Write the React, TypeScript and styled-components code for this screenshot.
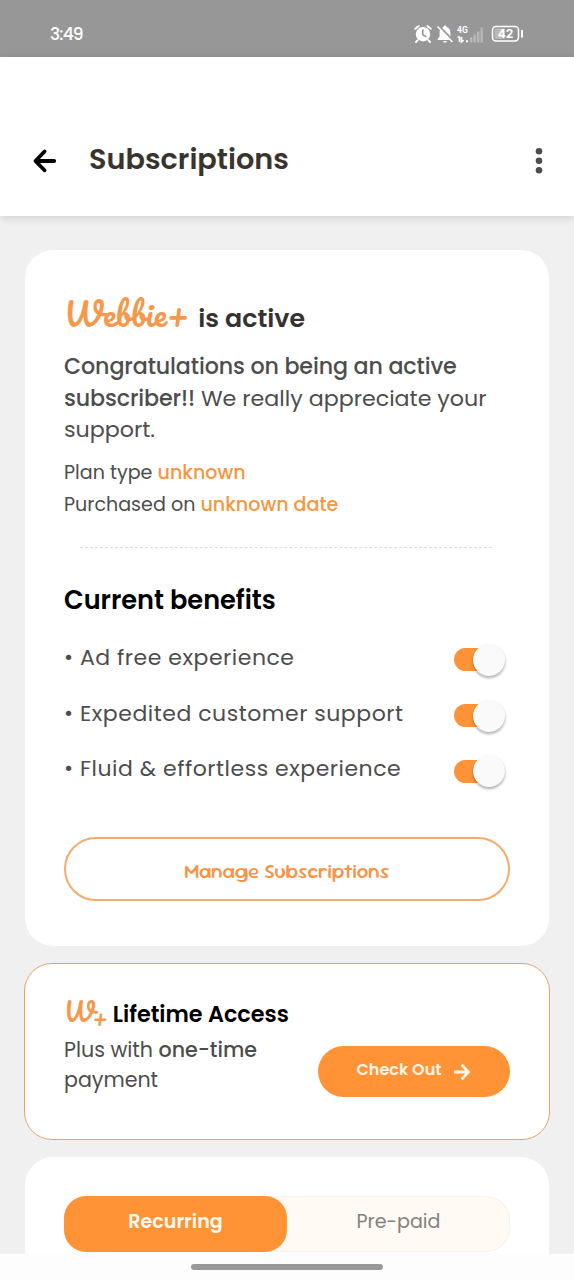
import React from 'react';
import styled, { createGlobalStyle } from 'styled-components';

const orange = '#ff9335';

const GlobalStyle = createGlobalStyle`
  * { box-sizing: border-box; }
  html, body { margin: 0; padding: 0; }
  body {
    background: #f0f0f0;
    font-family: Poppins, Inter, 'Open Sans', sans-serif;
    font-feature-settings: 'cv11' 1;
    overflow: hidden;
  }
`;

const Screen = styled.div`
  display: flex;
  flex-direction: column;
  width: 574px;
  height: 1280px;
  overflow: hidden;
  background: #f0f0f0;
`;

const StatusBar = styled.div`
  flex: none;
  display: flex;
  align-items: center;
  justify-content: space-between;
  height: 57px;
  padding: 11px 49px 0 50px;
  background: #979797;
  color: #fff;
`;

const Clock = styled.span`
  font-size: 17px;
  font-weight: 500;
  letter-spacing: -0.8px;
`;

const Header = styled.header`
  flex: none;
  display: flex;
  align-items: center;
  height: 159px;
  padding: 48px 26px 0 32px;
  background: #fff;
  box-shadow: 0 2px 8px rgba(0, 0, 0, 0.14);
`;

const Title = styled.h1`
  flex: 1;
  margin: 0 0 3px 32px;
  font-size: 28.7px;
  line-height: 36px;
  font-weight: 600;
  color: #3a342e;
`;

const Content = styled.main`
  flex: 1;
  min-height: 0;
  display: flex;
  flex-direction: column;
  gap: 17px;
  padding: 34px 24px 0;
  overflow: hidden;
`;

const Card = styled.section<{ $height: number; $outlined?: boolean }>`
  flex: none;
  height: ${(p) => p.$height}px;
  margin: ${(p) => (p.$outlined ? 0 : '0 1px')};
  padding: ${(p) => (p.$outlined ? '35px 39px 0' : '39px 39px 0')};
  border: ${(p) => (p.$outlined ? `1px solid #e9a163` : 'none')};
  border-radius: 28px;
  background: #fff;
`;

const Run = styled.span<{ $ls?: number; $bold?: boolean; $accent?: boolean }>`
  letter-spacing: ${(p) => p.$ls ?? 0}px;
  font-weight: ${(p) => (p.$bold || p.$accent ? 500 : 'inherit')};
  color: ${(p) => (p.$accent ? '#f8963f' : 'inherit')};
`;

const BrandLine = styled.h2`
  display: flex;
  align-items: baseline;
  height: 58px;
  margin: 0;
  padding: 8px 0 0;
  font-size: 25.3px;
  line-height: 40px;
  font-weight: 600;
  color: #35322f;
`;

const Wordmark = styled.span<{ $size: number; $gap: number }>`
  margin-right: ${(p) => p.$gap}px;
  font-family: Pacifico, Lato, sans-serif;
  font-size: ${(p) => p.$size}px;
  line-height: 1;
  font-weight: 400;
  color: #f5984a;
`;

const PlusMark = styled.span`
  position: relative;
  top: 4px;
  margin-left: -2px;
  font-size: 22px;
`;

const Lead = styled.p`
  margin: 4px 0 11px;
  font-size: 22.2px;
  line-height: 31.5px;
  color: #4d4d4d;
  white-space: nowrap;
`;

const Detail = styled.p`
  margin: 0;
  font-size: 19.1px;
  line-height: 32px;
  color: #4d4d4d;
`;

const Divider = styled.hr`
  width: 412px;
  margin: 26px 0 0 16px;
  border: 0;
  border-top: 1px dashed #e2d9d2;
`;

const SectionTitle = styled.h3`
  margin: 33px 0 22px;
  font-size: 25.6px;
  line-height: 38px;
  font-weight: 600;
  color: #000;
`;

const Benefit = styled.div`
  display: flex;
  align-items: center;
  justify-content: space-between;
  height: 55.7px;
  padding-right: 5px;
  font-size: 22px;
  color: #4d4d4d;
`;

const BenefitList = styled.div`
  margin-top: -11px;
`;

const Toggle = styled.span`
  display: flex;
  align-items: center;
  justify-content: flex-end;
  width: 51px;
  height: 23px;
  margin-top: 5px;
  border-radius: 12px;
  background: linear-gradient(90deg, ${orange} 36px, transparent 36px);
`;

const Knob = styled.span`
  width: 32px;
  height: 32px;
  border-radius: 50%;
  background: #fafafa;
  box-shadow: 0 2px 3px rgba(0, 0, 0, 0.32);
`;

const OutlineButton = styled.button`
  display: block;
  width: 446px;
  height: 64px;
  margin-top: 40px;
  padding: 4px 0 0;
  border: 2px solid #f3ac6b;
  border-radius: 32px;
  background: #fff;
  color: #f5954a;
  font: 500 20.5px 'Sour Gummy', Lato, sans-serif;
`;

const OfferTitle = styled.h3`
  display: flex;
  align-items: baseline;
  margin: 0;
  font-size: 22.3px;
  line-height: 32px;
  font-weight: 600;
  letter-spacing: -0.05px;
  color: #000;
`;

const OfferBody = styled.div`
  display: flex;
  justify-content: space-between;
`;

const OfferText = styled.p`
  margin: 4px 0 0;
  font-size: 20.6px;
  line-height: 29.5px;
  color: #4d4d4d;
  white-space: nowrap;
`;

const FilledButton = styled.button`
  display: flex;
  align-items: center;
  justify-content: center;
  gap: 12px;
  width: 192px;
  height: 51px;
  margin-top: 15px;
  padding: 0;
  border: 0;
  border-radius: 26px;
  background: ${orange};
  color: #fff6e8;
  font: 600 16px Poppins, Inter, sans-serif;
`;

const ButtonLabel = styled.span`
  padding-bottom: 4px;
`;

const Tabs = styled.div`
  display: flex;
  height: 56px;
  border-radius: 24px;
  background: #fffaf3;
  box-shadow: inset 0 0 0 1px #f8f3ee;
`;

const Tab = styled.div<{ $active?: boolean }>`
  flex: 1;
  display: flex;
  align-items: center;
  justify-content: center;
  padding-bottom: 5px;
  border-radius: 22px;
  background: ${(p) => (p.$active ? orange : 'transparent')};
  color: ${(p) => (p.$active ? '#fffaf2' : '#85817d')};
  font-size: 19.1px;
  font-weight: ${(p) => (p.$active ? 600 : 400)};
`;

const NavBar = styled.div`
  flex: none;
  display: flex;
  justify-content: center;
  height: 26px;
  padding-top: 10px;
  background: #fdfdfd;
`;

const HomeIndicator = styled.div`
  width: 192px;
  height: 6px;
  border-radius: 3px;
  background: #999;
`;

const BackArrow = () => (
  <svg width="25" height="26" viewBox="0 0 25 26" fill="none" stroke="#000" strokeWidth="3.8" strokeLinecap="round" strokeLinejoin="round">
    <path d="M12.5 3.5 3.5 13l9 9.3M4 13h18.2" />
  </svg>
);

const MoreDots = () => (
  <svg width="18" height="28" viewBox="0 0 18 28" fill="#4d4d4d">
    <circle cx="9" cy="4.2" r="3.3" />
    <circle cx="9" cy="13.7" r="3.3" />
    <circle cx="9" cy="23.2" r="3.3" />
  </svg>
);

const CheckOutArrow = () => (
  <svg width="18" height="18" viewBox="0 0 18 18" fill="none" stroke="#fff6e8" strokeWidth="2.8">
    <path d="M1 9h14M8.7 1.8 15.4 9l-6.7 7.2" />
  </svg>
);

const StatusIcons = () => (
  <svg width="112" height="22" viewBox="0 0 112 22" fill="none">
    <g stroke="#fff" strokeLinecap="round">
      <circle cx="10" cy="11.2" r="7.2" fill="#fff" stroke="none" />
      <path d="M2.3 5.8 5.6 3M17.7 5.8 14.4 3M4.5 17.4 3 19M15.5 17.4 17 19" strokeWidth="2" />
      <path d="M9.8 7v4.8l3 1.8" stroke="#979797" strokeWidth="1.6" />
    </g>
    <path d="M32 2.500c.9 0 1.400.6 1.400 1.400 2.600.8 4 2.700 4 5.300v4.300l1.900 2.400v1H24.700v-1l1.900-2.400V9.200c0-2.600 1.400-4.500 4-5.300 0-.8.500-1.400 1.400-1.400ZM30 18h4c-.4 2.200-3.600 2.200-4 0Z" fill="#fff" />
    <path d="m25.500 2.500 15 15.500" stroke="#979797" strokeWidth="2" />
    <path d="m24.500 3.500 15 15.500" stroke="#fff" strokeWidth="1.500" />
    <text x="44" y="9.500" fill="#fff" fontFamily="Roboto, sans-serif" fontSize="8.500" fontWeight="700">4G</text>
    <path d="M44.500 14h2v5m2-5v5l2-1.800" stroke="#fff" strokeWidth="1.600" />
    <rect x="53" y="17.300" width="2" height="2" fill="#fff" />
    <g fill="#fff" fillOpacity=".32">
      <rect x="57" y="14" width="2.400" height="5.500" />
      <rect x="60.500" y="11.500" width="2.400" height="8" />
      <rect x="64" y="8.500" width="2.400" height="11" />
      <rect x="67.500" y="4.500" width="2.400" height="15" />
    </g>
    <rect x="79.500" y="3.500" width="26" height="14.500" rx="3.500" stroke="#fff" strokeWidth="1.500" />
    <rect x="81.500" y="5.500" width="10" height="10.500" rx="1.500" fill="#fff" fillOpacity=".35" />
    <text x="92.500" y="15.200" fill="#fff" fontFamily="Inter, sans-serif" fontSize="12" fontWeight="700" textAnchor="middle">42</text>
    <path d="M109 7v7.500" stroke="#fff" strokeWidth="2" />
  </svg>
);

const benefits = ['• Ad free experience', '• Expedited customer support', '• Fluid & effortless experience'];

export default function App() {
  return (
    <Screen>
      <GlobalStyle />
      <StatusBar>
        <Clock>3:49</Clock>
        <StatusIcons />
      </StatusBar>
      <Header>
        <BackArrow />
        <Title>Subscriptions</Title>
        <MoreDots />
      </Header>
      <Content>
        <Card $height={696}>
          <BrandLine>
            <Wordmark $size={32} $gap={9}>Webbie+</Wordmark>
            <Run>is active</Run>
          </BrandLine>
          <Lead>
            <Run $bold $ls={-0.11}>Congratulations on being an active</Run>
            <br />
            <Run $bold $ls={-0.11}>subscriber!!</Run> We really appreciate your
            <br />
            support.
          </Lead>
          <Detail>
            Plan type <Run $accent>unknown</Run>
          </Detail>
          <Detail>
            Purchased on <Run $accent>unknown date</Run>
          </Detail>
          <Divider />
          <SectionTitle>Current benefits</SectionTitle>
          <BenefitList>
            {benefits.map((label) => (
              <Benefit key={label}>
                <Run $ls={0.52}>{label}</Run>
                <Toggle>
                  <Knob />
                </Toggle>
              </Benefit>
            ))}
          </BenefitList>
          <OutlineButton>Manage Subscriptions</OutlineButton>
        </Card>
        <Card $height={177} $outlined>
          <OfferTitle>
            <Wordmark $size={25} $gap={5}>
              W<PlusMark>+</PlusMark>
            </Wordmark>
            <Run>Lifetime Access</Run>
          </OfferTitle>
          <OfferBody>
            <OfferText>
              Plus with <Run $bold>one-time</Run>
              <br />
              payment
            </OfferText>
            <FilledButton>
              <ButtonLabel>Check Out</ButtonLabel>
              <CheckOutArrow />
            </FilledButton>
          </OfferBody>
        </Card>
        <Card $height={140}>
          <Tabs>
            <Tab $active>Recurring</Tab>
            <Tab>Pre-paid</Tab>
          </Tabs>
        </Card>
      </Content>
      <NavBar>
        <HomeIndicator />
      </NavBar>
    </Screen>
  );
}
